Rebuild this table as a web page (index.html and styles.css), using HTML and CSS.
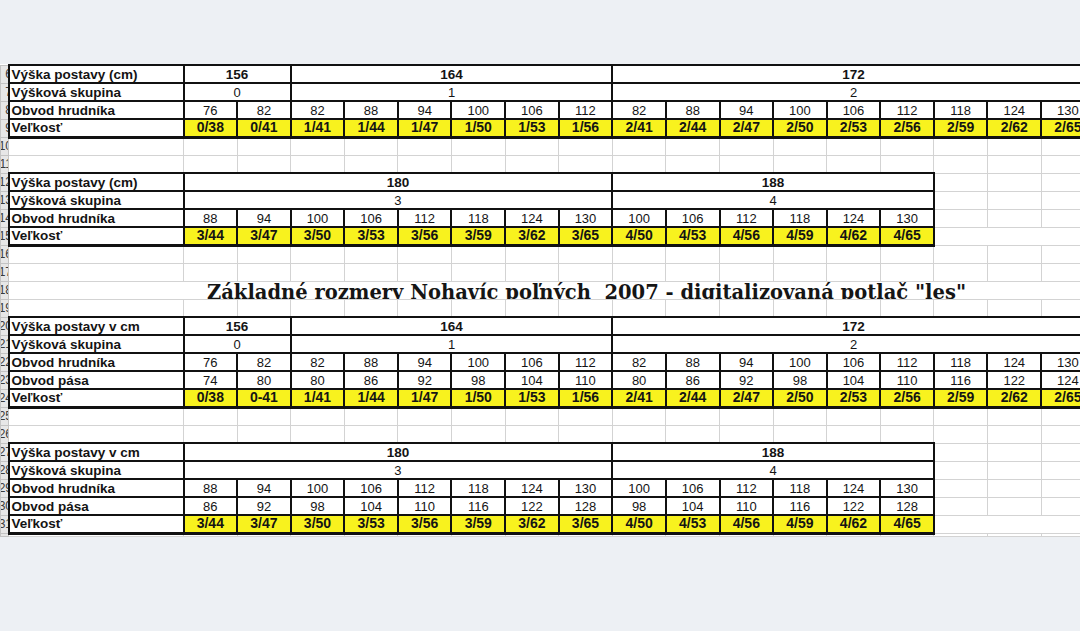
FILE: index.html
```html
<!DOCTYPE html>
<html lang="sk">
<head>
<meta charset="utf-8">
<title>Základné rozmery</title>
<link rel="stylesheet" href="styles.css">
</head>
<body>
<div class="viewport">
<table class="sheet">
<colgroup><col class="c-rh"><col class="c-a"><col class="c-d" span="17"></colgroup>
<tbody>
<tr><td class="rh"><div class="rhn"><span>6</span></div></td><td class="k lbl">Výška postavy (cm)</td><td class="k hb" colspan="2">156</td><td class="k hb" colspan="6">164</td><td class="k hb" colspan="9">172</td></tr>
<tr><td class="rh"><div class="rhn"><span>7</span></div></td><td class="k lbl">Výšková skupina</td><td class="k" colspan="2">0</td><td class="k" colspan="6">1</td><td class="k" colspan="9">2</td></tr>
<tr><td class="rh"><div class="rhn"><span>8</span></div></td><td class="k lbl">Obvod hrudníka</td><td class="k">76</td><td class="k">82</td><td class="k">82</td><td class="k">88</td><td class="k">94</td><td class="k">100</td><td class="k">106</td><td class="k">112</td><td class="k">82</td><td class="k">88</td><td class="k">94</td><td class="k">100</td><td class="k">106</td><td class="k">112</td><td class="k">118</td><td class="k">124</td><td class="k">130</td></tr>
<tr class="last"><td class="rh"><div class="rhn"><span>9</span></div></td><td class="k lbl">Veľkosť</td><td class="k y">0/38</td><td class="k y">0/41</td><td class="k y">1/41</td><td class="k y">1/44</td><td class="k y">1/47</td><td class="k y">1/50</td><td class="k y">1/53</td><td class="k y">1/56</td><td class="k y">2/41</td><td class="k y">2/44</td><td class="k y">2/47</td><td class="k y">2/50</td><td class="k y">2/53</td><td class="k y">2/56</td><td class="k y">2/59</td><td class="k y">2/62</td><td class="k y">2/65</td></tr>
<tr><td class="rh"><div class="rhn"><span>10</span></div></td><td></td><td></td><td></td><td></td><td></td><td></td><td></td><td></td><td></td><td></td><td></td><td></td><td></td><td></td><td></td><td></td><td></td><td></td></tr>
<tr><td class="rh"><div class="rhn"><span>11</span></div></td><td></td><td></td><td></td><td></td><td></td><td></td><td></td><td></td><td></td><td></td><td></td><td></td><td></td><td></td><td></td><td></td><td></td><td></td></tr>
<tr><td class="rh"><div class="rhn"><span>12</span></div></td><td class="k lbl">Výška postavy (cm)</td><td class="k hb" colspan="8">180</td><td class="k hb" colspan="6">188</td><td></td><td></td><td></td></tr>
<tr><td class="rh"><div class="rhn"><span>13</span></div></td><td class="k lbl">Výšková skupina</td><td class="k" colspan="8">3</td><td class="k" colspan="6">4</td><td></td><td></td><td></td></tr>
<tr><td class="rh"><div class="rhn"><span>14</span></div></td><td class="k lbl">Obvod hrudníka</td><td class="k">88</td><td class="k">94</td><td class="k">100</td><td class="k">106</td><td class="k">112</td><td class="k">118</td><td class="k">124</td><td class="k">130</td><td class="k">100</td><td class="k">106</td><td class="k">112</td><td class="k">118</td><td class="k">124</td><td class="k">130</td><td></td><td></td><td></td></tr>
<tr class="last"><td class="rh"><div class="rhn"><span>15</span></div></td><td class="k lbl">Veľkosť</td><td class="k y">3/44</td><td class="k y">3/47</td><td class="k y">3/50</td><td class="k y">3/53</td><td class="k y">3/56</td><td class="k y">3/59</td><td class="k y">3/62</td><td class="k y">3/65</td><td class="k y">4/50</td><td class="k y">4/53</td><td class="k y">4/56</td><td class="k y">4/59</td><td class="k y">4/62</td><td class="k y">4/65</td><td colspan="3"></td></tr>
<tr><td class="rh"><div class="rhn"><span>16</span></div></td><td></td><td></td><td></td><td></td><td></td><td></td><td></td><td></td><td></td><td></td><td></td><td></td><td></td><td></td><td></td><td></td><td></td><td></td></tr>
<tr><td class="rh"><div class="rhn"><span>17</span></div></td><td></td><td></td><td></td><td></td><td></td><td></td><td></td><td></td><td></td><td></td><td></td><td></td><td></td><td></td><td></td><td></td><td></td><td></td></tr>
<tr><td class="rh"><div class="rhn"><span>18</span></div></td><td colspan="18" class="titlecell"><div class="title">Základné rozmery Nohavíc poľných&nbsp; 2007 - digitalizovaná potlač "les"</div></td></tr>
<tr><td class="rh"><div class="rhn"><span>19</span></div></td><td></td><td></td><td></td><td></td><td></td><td></td><td></td><td></td><td></td><td></td><td></td><td></td><td></td><td></td><td></td><td></td><td></td><td></td></tr>
<tr><td class="rh"><div class="rhn"><span>20</span></div></td><td class="k lbl">Výška postavy v cm</td><td class="k hb" colspan="2">156</td><td class="k hb" colspan="6">164</td><td class="k hb" colspan="9">172</td></tr>
<tr><td class="rh"><div class="rhn"><span>21</span></div></td><td class="k lbl">Výšková skupina</td><td class="k" colspan="2">0</td><td class="k" colspan="6">1</td><td class="k" colspan="9">2</td></tr>
<tr><td class="rh"><div class="rhn"><span>22</span></div></td><td class="k lbl">Obvod hrudníka</td><td class="k">76</td><td class="k">82</td><td class="k">82</td><td class="k">88</td><td class="k">94</td><td class="k">100</td><td class="k">106</td><td class="k">112</td><td class="k">82</td><td class="k">88</td><td class="k">94</td><td class="k">100</td><td class="k">106</td><td class="k">112</td><td class="k">118</td><td class="k">124</td><td class="k">130</td></tr>
<tr><td class="rh"><div class="rhn"><span>23</span></div></td><td class="k lbl">Obvod pása</td><td class="k">74</td><td class="k">80</td><td class="k">80</td><td class="k">86</td><td class="k">92</td><td class="k">98</td><td class="k">104</td><td class="k">110</td><td class="k">80</td><td class="k">86</td><td class="k">92</td><td class="k">98</td><td class="k">104</td><td class="k">110</td><td class="k">116</td><td class="k">122</td><td class="k">124</td></tr>
<tr class="last"><td class="rh"><div class="rhn"><span>24</span></div></td><td class="k lbl">Veľkosť</td><td class="k y">0/38</td><td class="k y">0-41</td><td class="k y">1/41</td><td class="k y">1/44</td><td class="k y">1/47</td><td class="k y">1/50</td><td class="k y">1/53</td><td class="k y">1/56</td><td class="k y">2/41</td><td class="k y">2/44</td><td class="k y">2/47</td><td class="k y">2/50</td><td class="k y">2/53</td><td class="k y">2/56</td><td class="k y">2/59</td><td class="k y">2/62</td><td class="k y">2/65</td></tr>
<tr><td class="rh"><div class="rhn"><span>25</span></div></td><td></td><td></td><td></td><td></td><td></td><td></td><td></td><td></td><td></td><td></td><td></td><td></td><td></td><td></td><td></td><td></td><td></td><td></td></tr>
<tr><td class="rh"><div class="rhn"><span>26</span></div></td><td></td><td></td><td></td><td></td><td></td><td></td><td></td><td></td><td></td><td></td><td></td><td></td><td></td><td></td><td></td><td></td><td></td><td></td></tr>
<tr><td class="rh"><div class="rhn"><span>27</span></div></td><td class="k lbl">Výška postavy v cm</td><td class="k hb" colspan="8">180</td><td class="k hb" colspan="6">188</td><td></td><td></td><td></td></tr>
<tr><td class="rh"><div class="rhn"><span>28</span></div></td><td class="k lbl">Výšková skupina</td><td class="k" colspan="8">3</td><td class="k" colspan="6">4</td><td></td><td></td><td></td></tr>
<tr><td class="rh"><div class="rhn"><span>29</span></div></td><td class="k lbl">Obvod hrudníka</td><td class="k">88</td><td class="k">94</td><td class="k">100</td><td class="k">106</td><td class="k">112</td><td class="k">118</td><td class="k">124</td><td class="k">130</td><td class="k">100</td><td class="k">106</td><td class="k">112</td><td class="k">118</td><td class="k">124</td><td class="k">130</td><td></td><td></td><td></td></tr>
<tr><td class="rh"><div class="rhn"><span>30</span></div></td><td class="k lbl">Obvod pása</td><td class="k">86</td><td class="k">92</td><td class="k">98</td><td class="k">104</td><td class="k">110</td><td class="k">116</td><td class="k">122</td><td class="k">128</td><td class="k">98</td><td class="k">104</td><td class="k">110</td><td class="k">116</td><td class="k">122</td><td class="k">128</td><td></td><td></td><td></td></tr>
<tr class="last"><td class="rh"><div class="rhn"><span>31</span></div></td><td class="k lbl">Veľkosť</td><td class="k y">3/44</td><td class="k y">3/47</td><td class="k y">3/50</td><td class="k y">3/53</td><td class="k y">3/56</td><td class="k y">3/59</td><td class="k y">3/62</td><td class="k y">3/65</td><td class="k y">4/50</td><td class="k y">4/53</td><td class="k y">4/56</td><td class="k y">4/59</td><td class="k y">4/62</td><td class="k y">4/65</td><td colspan="3"></td></tr>
<tr class="tail"><td class="rh"></td><td></td><td></td><td></td><td></td><td></td><td></td><td></td><td></td><td></td><td></td><td></td><td></td><td></td><td></td><td></td><td></td><td></td><td></td></tr>
</tbody>
</table>
</div>
</body>
</html>
```
FILE: styles.css
```css
html, body {
  margin: 0;
  padding: 0;
}
body {
  background: #edf0f4;
  width: 1080px;
  height: 631px;
  overflow: hidden;
}
.viewport {
  width: 1080px;
  overflow: hidden;
  padding-top: 64px;
}
.sheet {
  border-collapse: collapse;
  table-layout: fixed;
  width: 1094px;
  background: #fff;
  font-family: "Liberation Sans", Arial, sans-serif;
  font-size: 13px;
  color: #141414;
}
.c-rh { width: 8px; }
.c-a { width: 175px; }
.c-d { width: 53.6px; }
.sheet tr { height: 18px; }
.sheet tr.tail { height: 3px; }
.sheet td {
  border: 1px solid #d3d3d3;
  padding: 0;
  text-align: center;
  white-space: nowrap;
  overflow: hidden;
  line-height: 15px;
}
.sheet td.rh {
  background: #e7e7e7;
  border-color: #c4c4c4;
  font-size: 12px;
  color: #3a3a3a;
}
.rhn {
  width: 8px;
  overflow: hidden;
  display: flex;
  justify-content: flex-end;
}
.rhn span { margin-right: -3px; }
.sheet td.k {
  border: 2px solid #111;
}
.sheet tr.last td.k {
  border-bottom-width: 3px;
}
.sheet td.lbl {
  text-align: left;
  font-weight: bold;
  font-size: 13.5px;
  padding-left: 2px;
}
.sheet td.hb {
  font-weight: bold;
  font-size: 13.5px;
}
.sheet td.y {
  background: #f8f21e;
  font-weight: bold;
  font-size: 14px;
}
.sheet td.titlecell {
  text-align: left;
}
.title {
  height: 17px;
  overflow: hidden;
  padding-left: 198px;
  font-family: "DejaVu Serif", serif;
  font-weight: bold;
  font-size: 19.5px;
  line-height: 21px;
  color: #151515;
}
```
